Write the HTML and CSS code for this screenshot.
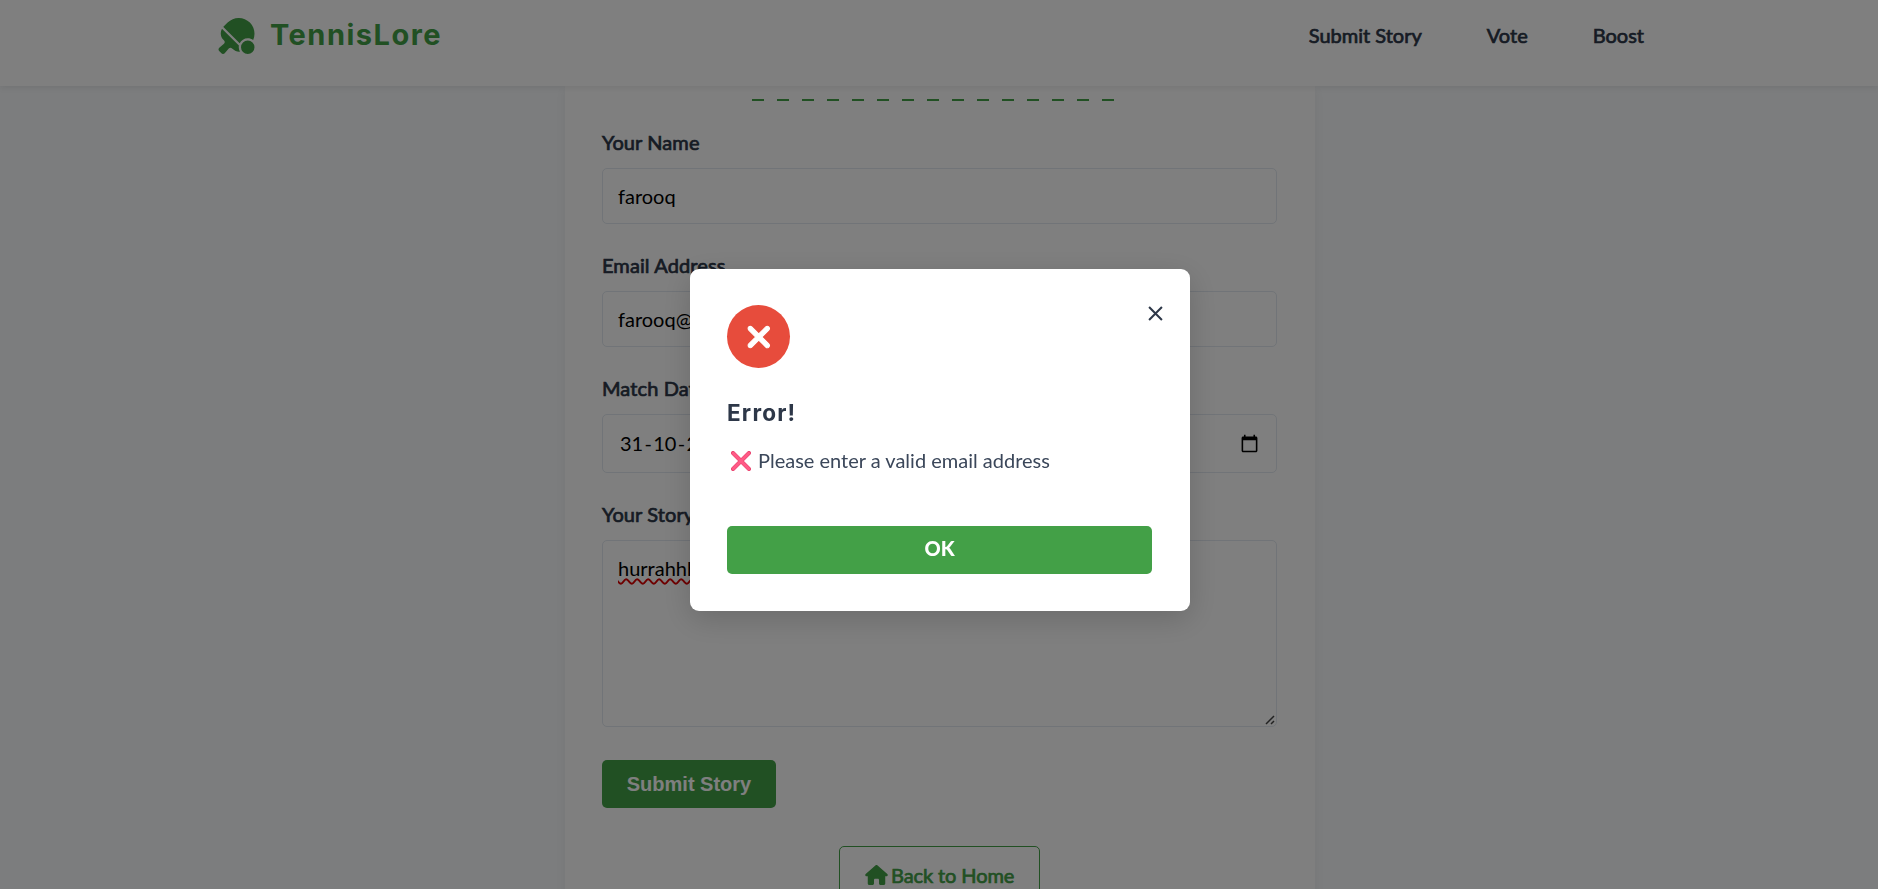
FILE: index.html
```html
<!DOCTYPE html>
<html lang="en">
<head>
<meta charset="utf-8">
<title>TennisLore</title>
<link rel="stylesheet" href="styles.css">
</head>
<body>
<header class="header">
  <div class="brand">
    <svg class="brand-icon" viewBox="0 0 640 512"><path d="M480 288c-50.1 0-93.6 28.8-114.6 70.8L132.9 126.3l.6-.6 60.1-60.1c87.5-87.5 229.3-87.5 316.8 0c67.1 67.1 82.7 166.3 46.8 248.3C535.8 297.6 509 288 480 288zM113.3 151.9L354.1 392.7c-1.4 7.5-2.1 15.3-2.1 23.3c0 23.2 6.2 44.9 16.9 63.7c-3 .2-6.1 .3-9.2 .3H357c-33.9 0-66.5-13.5-90.5-37.5l-9.8-9.8c-13.1-13.1-34.6-12.4-46.8 1.7L152.2 501c-5.8 6.7-14.2 10.7-23 11s-17.5-3.1-23.8-9.4l-32-32c-6.3-6.3-9.7-14.9-9.4-23.8s4.3-17.2 11-23l66.6-57.7c14-12.2 14.8-33.7 1.7-46.8l-9.8-9.8c-24-24-37.5-56.6-37.5-90.5v-2.7c0-22.8 6.1-44.9 17.3-64.3zM480 320a96 96 0 1 1 0 192 96 96 0 1 1 0-192z"/></svg>
    <span class="brand-name">TennisLore</span>
  </div>
  <nav class="nav">
    <a class="nav-link">Submit Story</a>
    <a class="nav-link">Vote</a>
    <a class="nav-link">Boost</a>
  </nav>
</header>
<main class="page">
  <form class="card">
    <div class="divider"></div>
    <label class="label">Your Name</label>
    <div class="field">farooq</div>
    <label class="label">Email Address</label>
    <div class="field">farooq@</div>
    <label class="label">Match Date</label>
    <div class="field field-date"><span class="date">31<i class="dash">-</i>10<i class="dash">-</i>2</span>
      <svg class="calendar" viewBox="0 0 24 24"><path d="M20 3h-1V1h-2v2H7V1H5v2H4c-1.1 0-2 .9-2 2v16c0 1.1.9 2 2 2h16c1.1 0 2-.9 2-2V5c0-1.100-.9-2-2-2zm0 18H4V8h16v13z"/></svg>
    </div>
    <label class="label">Your Story</label>
    <div class="field field-story"><span class="misspelled">hurrahhh</span>
      <svg class="grip" viewBox="0 0 10 10"><path d="M1 9L9 1M6 9L9 6"/></svg>
    </div>
    <button class="submit" type="button">Submit Story</button>
    <a class="home">
      <svg class="home-icon" viewBox="0 0 576 512"><path d="M575.8 255.5c0 18-15 32.1-32 32.1h-32l.7 160.2c0 2.700-.2 5.400-.5 8.100V472c0 22.100-17.900 40-40 40H456c-1.100 0-2.200 0-3.300-.1c-1.400 .1-2.800 .1-4.200 .1H392c-22.100 0-40-17.900-40-40V384c0-17.700-14.300-32-32-32H256c-17.700 0-32 14.300-32 32v88c0 22.100-17.900 40-40 40H104c-22.100 0-40-17.900-40-40V287.600H32c-18 0-32-14-32-32.100c0-9 3-17 10-24L266.400 8c7-7 15-8 22-8s15 2 21 7L564.800 231.500c8 7 12 15 11 24z"/></svg>
      <span>Back to Home</span>
    </a>
  </form>
</main>
<div class="overlay">
  <section class="modal">
    <svg class="close" viewBox="0 0 14 14"><path d="M1 1L13 13M13 1L1 13"/></svg>
    <div class="badge"><svg class="badge-icon" viewBox="0 0 384 512"><path d="M342.600 150.600c12.500-12.500 12.500-32.800 0-45.300s-32.800-12.500-45.300 0L192 210.700 86.600 105.400c-12.500-12.500-32.800-12.500-45.300 0s-12.500 32.800 0 45.300L146.700 256 41.400 361.400c-12.500 12.500-12.500 32.800 0 45.300s32.800 12.500 45.300 0L192 301.300 297.400 406.600c12.500 12.500 32.800 12.500 45.300 0s12.500-32.800 0-45.300L237.300 256 342.600 150.600z"/></svg></div>
    <h2 class="title">Error!</h2>
    <p class="message">
      <svg class="cross" viewBox="0 0 20 20"><path class="cross-edge" d="M2 2L18 18M18 2L2 18"/><path class="cross-fill" d="M2.300 2.300L17.700 17.700M17.700 2.300L2.300 17.700"/></svg>
      <span class="message-text">Please enter a valid email address</span>
    </p>
    <button class="ok" type="button">OK</button>
  </section>
</div>
</body>
</html>
```
FILE: styles.css
```css
* { box-sizing: border-box; }
body {
  margin: 0;
  height: 889px;
  overflow: hidden;
  background: #f8fafc;
  color: #2d3748;
  font-family: Lato, sans-serif;
  font-size: 20px;
  line-height: 24px;
}
.header {
  position: relative;
  z-index: 1;
  display: flex;
  justify-content: space-between;
  align-items: flex-start;
  height: 86px;
  padding: 18px 234px 0 214px;
  background: #fff;
  box-shadow: 0 2px 6px rgba(0, 0, 0, .08);
}
.brand { display: flex; color: #43a047; }
.brand-icon { width: 45px; height: 36px; fill: #43a047; }
.brand-name {
  margin-left: 11px;
  font: 700 29px/33px Inter, sans-serif;
  letter-spacing: 1.500px;
}
.nav { display: flex; gap: 65px; padding-top: 5px; }
.nav-link, .label, .home { -webkit-text-stroke: .7px currentColor; }
.page { display: flex; justify-content: center; height: 803px; overflow: hidden; }
.card {
  display: flex;
  flex-direction: column;
  align-items: flex-start;
  width: 750px;
  height: 900px;
  margin-left: 2px;
  padding: 13px 38px 0 37px;
  background: #fff;
  box-shadow: 0 4px 10px rgba(0, 0, 0, .06);
}
.divider {
  flex: none;
  align-self: center;
  width: 375px;
  height: 2px;
  background: repeating-linear-gradient(90deg, #43a047 0 12px, transparent 12px 25px);
}
.label { margin-top: 29px; height: 24px; flex: none; letter-spacing: .1px; }
.field {
  display: flex;
  align-items: center;
  flex: none;
  width: 675px;
  height: 56px;
  margin-top: 14px;
  padding: 0 15px;
  border: 1px solid #e2e8f0;
  border-radius: 5px;
  color: #000;
}
.field-date { height: 59px; justify-content: space-between; padding: 0 17px; }
.date { height: 26px; }
.dash { font-style: normal; margin: 0 1.300px; }
.calendar { width: 19px; height: 19px; }
.field-story { height: 187px; align-items: flex-start; justify-content: space-between; padding: 15px 1px 1px 15px; }
.misspelled { text-decoration: underline wavy #d00 1.500px; text-underline-offset: 2px; }
.grip { align-self: flex-end; width: 10px; height: 10px; fill: none; stroke: #444; stroke-width: 1.5; }
.submit, .ok {
  height: 48px;
  padding: 0;
  border: 0;
  border-radius: 5px;
  background: #43a047;
  color: #fff;
}
.submit { flex: none; width: 174px; margin-top: 33px; font: 700 20px "Liberation Sans", Arial, sans-serif; }
.home {
  display: flex;
  align-items: flex-start;
  align-self: center;
  gap: 3px;
  flex: none;
  width: 201px;
  height: 60px;
  margin-top: 38px;
  padding: 16px 0 0 25px;
  border: 1px solid #43a047;
  border-radius: 5px;
  color: #43a047;
  letter-spacing: -.1px;
}
.home-icon { width: 23px; height: 20px; margin-top: 2px; fill: #43a047; stroke: none; }
.overlay {
  position: fixed;
  inset: 0;
  z-index: 2;
  padding-top: 269px;
  background: rgba(0, 0, 0, .5);
}
.modal {
  position: relative;
  display: flex;
  flex-direction: column;
  align-items: flex-start;
  width: 500px;
  height: 342px;
  margin-left: 690px;
  padding: 36px 38px 0 37px;
  border-radius: 9px;
  background: #fff;
  box-shadow: 0 8px 30px rgba(0, 0, 0, .17);
}
.close { position: absolute; top: 37px; right: 27px; width: 15px; height: 15px; fill: none; stroke: #2d3748; stroke-width: 1.900; }
.badge { display: flex; align-items: center; justify-content: center; width: 63px; height: 63px; border-radius: 50%; background: #e74c3c; }
.badge-icon { height: 34px; fill: #fff; stroke: #fff; stroke-width: 16; }
.title { margin: 31px 0 0; font: 700 22.500px/28px Inter, sans-serif; letter-spacing: 1.200px; }
.message { display: flex; align-items: center; margin: 22px 0 0; padding-left: 4px; gap: 7px; height: 24px; color: #3b475a; white-space: nowrap; }
.message-text { height: 26px; }
.cross { width: 20px; height: 20px; fill: none; stroke-linecap: round; }
.cross-edge { stroke: #e8406c; stroke-width: 4; }
.cross-fill { stroke: #ff5a86; stroke-width: 3; }
.ok { width: 425px; margin-top: 53px; padding-bottom: 4px; font: 900 20px Lato, sans-serif; }
```
